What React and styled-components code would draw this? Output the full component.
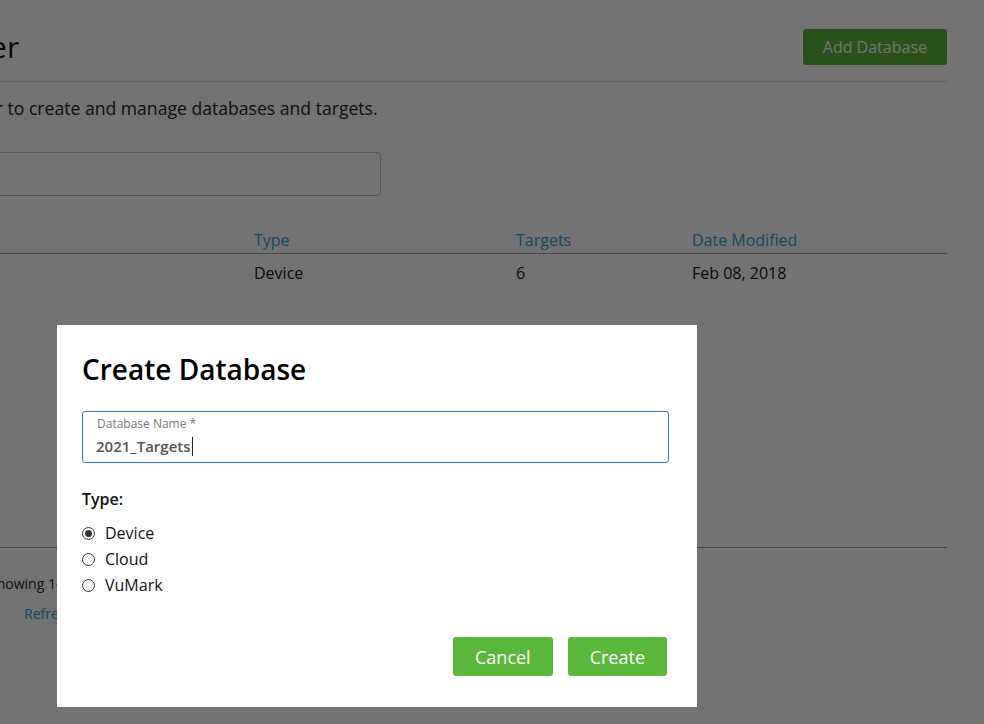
import React from 'react';
import styled, { createGlobalStyle } from 'styled-components';

const GlobalStyle = createGlobalStyle`
  html, body {
    margin: 0;
    padding: 0;
    overflow: hidden;
    background: #ffffff;
    font-family: "Open Sans", "Noto Sans", sans-serif;
    color: #222;
  }
  * { box-sizing: border-box; }
`;

// the page is scrolled sideways, so its left part sits outside the window
const Page = styled.div`
  width: 1149px;
  margin-left: -202px;
  height: 724px;
`;

const Header = styled.div`
  display: flex;
  justify-content: space-between;
  align-items: center;
  padding: 29px 0 16px;
  border-bottom: 1px solid #d8d8d8;
`;

const Title = styled.h1`
  margin: 0;
  font-size: 30px;
  font-weight: 400;
  line-height: 36px;
  color: #111;
`;

const GreenButton = styled.button`
  height: ${p => p.$h || 36}px;
  padding: 0 ${p => p.$px || 20}px;
  border: none;
  border-radius: 3px;
  background: #5cb73d;
  color: #ffffff;
  font-family: "Open Sans", sans-serif;
  font-size: ${p => p.$fs || 16}px;
  cursor: pointer;
`;

const Intro = styled.p`
  margin: 13px 0 0;
  padding-left: 8px;
  font-size: 17.6px;
  line-height: 26px;
  color: #222;
`;

const Search = styled.div`
  width: 583px;
  height: 44px;
  margin-top: 31px;
  border: 1px solid #c4c4c4;
  border-radius: 4px;
`;

const ListArea = styled.div`
  height: 324px;
  margin-top: 27px;
`;

const Table = styled.div`
  display: grid;
  grid-template-columns: 456px 262px 176px 1fr;
`;

const HeadCell = styled.div`
  padding: 6px 0 2px;
  font-size: 16px;
  line-height: 22px;
  color: #2f9fe0;
  border-bottom: 1px solid #9a9a9a;
`;

const Cell = styled.div`
  padding: 8px 0;
  font-size: 16px;
  line-height: 22px;
  color: #111;
`;

const Footer = styled.div`
  border-top: 1px solid #9a9a9a;
  padding: 25px 0 0 191px;
  display: flex;
  flex-direction: column;
  gap: 9px;
  font-size: 14px;
  line-height: 21px;
`;

const Link = styled.span`
  color: #2f9fe0;
  padding-left: 35px;
`;

const Overlay = styled.div`
  position: fixed;
  inset: 0;
  background: rgba(0, 0, 0, 0.55);
`;

const Modal = styled.div`
  position: fixed;
  left: 57px;
  top: 325px;
  width: 640px;
  height: 382px;
  background: #ffffff;
  padding: 27px 30px 31px 25px;
  display: flex;
  flex-direction: column;
`;

const ModalTitle = styled.h2`
  margin: 0;
  font-size: 28px;
  font-weight: 600;
  line-height: 34px;
  color: #000;
`;

const Field = styled.div`
  margin: 25px -2px 0 0;
  height: 52px;
  border: 1px solid #2a7fc4;
  border-radius: 3px;
  padding: 4px 14px 4px 13px;
  display: flex;
  flex-direction: column;
  gap: 3px;
`;

const FieldLabel = styled.span`
  font-size: 12px;
  line-height: 16px;
  color: #7a7a7a;
  padding-left: 1px;
`;

const FieldValue = styled.span`
  font-size: 15px;
  font-weight: 600;
  line-height: 22px;
  color: #555;
  display: flex;
  align-items: center;
`;

const Caret = styled.span`
  width: 1px;
  height: 19px;
  background: #222;
  margin-left: 1px;
`;

const TypeLabel = styled.div`
  margin-top: 25px;
  font-size: 16px;
  font-weight: 600;
  line-height: 22px;
  color: #111;
`;

const Options = styled.div`
  margin-top: 10px;
  display: flex;
  flex-direction: column;
`;

const Option = styled.label`
  display: flex;
  align-items: center;
  gap: 10px;
  font-size: 16px;
  line-height: 26px;
  color: #111;
`;

const Radio = styled.span`
  width: 13px;
  height: 13px;
  border-radius: 50%;
  border: 1px solid #333;
  display: flex;
  align-items: center;
  justify-content: center;

  &::after {
    content: "";
    width: 7px;
    height: 7px;
    border-radius: 50%;
    background: ${p => (p.$checked ? '#333' : 'transparent')};
  }
`;

const Actions = styled.div`
  margin-top: auto;
  display: flex;
  justify-content: flex-end;
  gap: 15px;
`;

const types = ['Device', 'Cloud', 'VuMark'];

export default function App() {
  return (
    <>
      <GlobalStyle />
      <Page>
        <Header>
          <Title>Target Manager</Title>
          <GreenButton>Add Database</GreenButton>
        </Header>
        <Intro>Use the Target Manager to create and manage databases and targets.</Intro>
        <Search />
        <ListArea>
          <Table>
            <HeadCell>Database</HeadCell>
            <HeadCell>Type</HeadCell>
            <HeadCell>Targets</HeadCell>
            <HeadCell>Date Modified</HeadCell>
            <Cell>Sample_Targets</Cell>
            <Cell>Device</Cell>
            <Cell>6</Cell>
            <Cell>Feb 08, 2018</Cell>
          </Table>
        </ListArea>
        <Footer>
          <span>Showing 1-1 of 1</span>
          <Link>Refresh</Link>
        </Footer>
      </Page>
      <Overlay />
      <Modal>
        <ModalTitle>Create Database</ModalTitle>
        <Field>
          <FieldLabel>Database Name *</FieldLabel>
          <FieldValue>
            2021_Targets
            <Caret />
          </FieldValue>
        </Field>
        <TypeLabel>Type:</TypeLabel>
        <Options>
          {types.map((t, i) => (
            <Option key={t}>
              <Radio $checked={i === 0} />
              {t}
            </Option>
          ))}
        </Options>
        <Actions>
          <GreenButton $h={39} $px={22} $fs={18}>Cancel</GreenButton>
          <GreenButton $h={39} $px={22} $fs={18}>Create</GreenButton>
        </Actions>
      </Modal>
    </>
  );
}
